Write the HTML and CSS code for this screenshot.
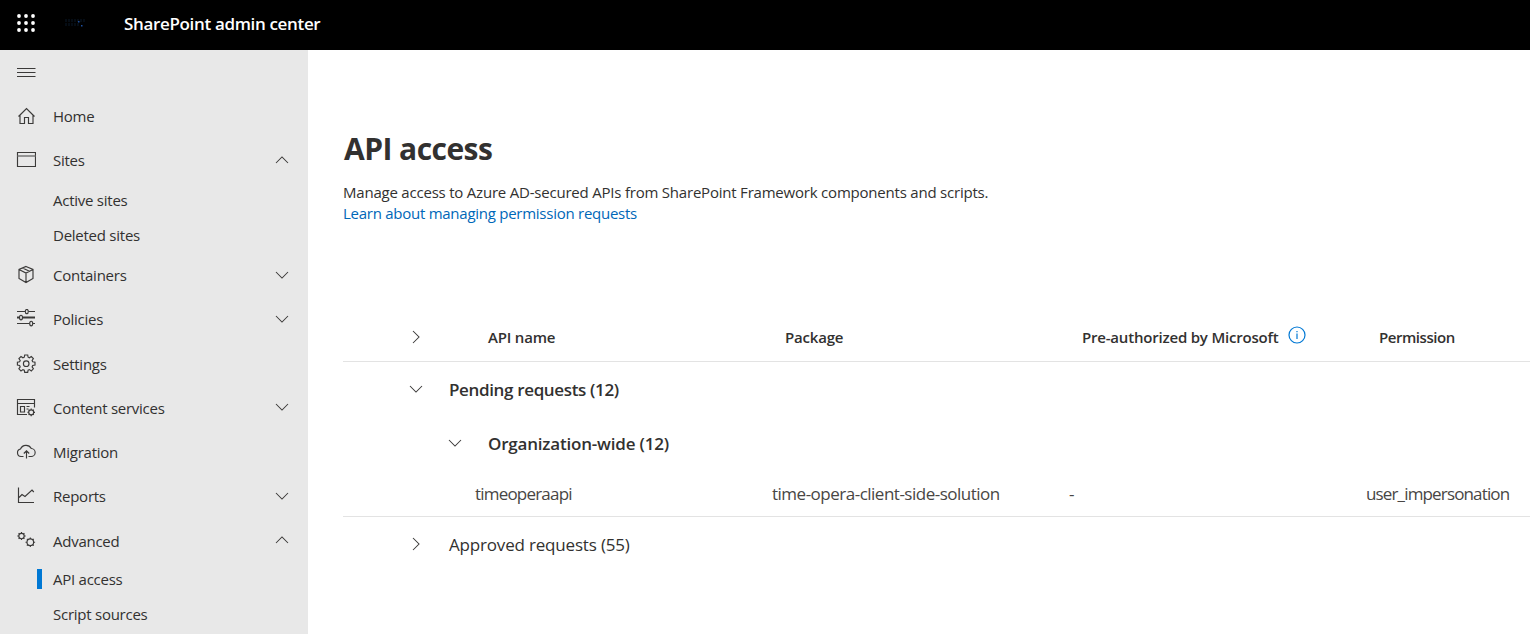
FILE: index.html
```html
<!DOCTYPE html>
<html lang="en">
<head>
  <meta charset="UTF-8" />
  <meta name="viewport" content="width=device-width, initial-scale=1.0" />
  <title>API access - SharePoint admin center</title>
  <link rel="stylesheet" href="styles.css">
</head>
<body>

<svg class="sprite" width="0" height="0">
  <symbol id="chev" viewBox="0 0 14 14"><path d="M1 4l6 6 6-6"/></symbol>
</svg>

<header class="topbar">
  <svg class="waffle" width="20" height="20" viewBox="0 0 20 20">
    <circle cx="3" cy="3" r="1.9"/><circle cx="10" cy="3" r="1.9"/><circle cx="17" cy="3" r="1.9"/>
    <circle cx="3" cy="10" r="1.9"/><circle cx="10" cy="10" r="1.9"/><circle cx="17" cy="10" r="1.9"/>
    <circle cx="3" cy="17" r="1.9"/><circle cx="10" cy="17" r="1.9"/><circle cx="17" cy="17" r="1.9"/>
  </svg>
  <svg class="logo" width="20" height="10" viewBox="0 0 20 10">
    <path d="M0 2.5h20M0 6.5h14" stroke="#050c14" stroke-width="3" stroke-dasharray="2 1"/>
    <rect x="13" y="3" width="1.5" height="1.5" fill="#1d4fa0"/>
    <rect x="16" y="7" width="1.5" height="1.5" fill="#1d4fa0"/>
  </svg>
  <span class="app-name">SharePoint admin center</span>
</header>

<div class="layout">
  <nav class="sidebar">
    <button type="button" class="menu-btn" aria-label="Menu">
      <svg class="icon" viewBox="0 0 20 20"><path d="M1 6.500h18.500M1 10.500h18.500M1 14.500h18.500"/></svg>
    </button>

    <a class="nav-item">
      <svg class="icon" viewBox="0 0 20 20"><path d="M2.500 10.500L10.500 2.500l8 8M4 9.200v8.300h4.500v-6h4v6H17V9.200"/></svg>
      <span>Home</span>
    </a>
    <a class="nav-item">
      <svg class="icon" viewBox="0 0 20 20"><path d="M1.500 2.500h18v14h-18z"/><path d="M1.500 6h18" class="soft"/></svg>
      <span>Sites</span>
      <svg class="chev up"><use href="#chev"/></svg>
    </a>
    <a class="sub-item">Active sites</a>
    <a class="sub-item">Deleted sites</a>
    <a class="nav-item">
      <svg class="icon" viewBox="0 0 20 20"><path d="M10 1.500l7 3v9l-7 4-7-4v-9zM3 4.500l7 3.500 7-3.500M10 8v9.500M6.500 3l7 3.300"/></svg>
      <span>Containers</span>
      <svg class="chev"><use href="#chev"/></svg>
    </a>
    <a class="nav-item">
      <svg class="icon" viewBox="0 0 20 20"><path d="M1 2.500h8M12.500 2.500H19M1 14.500h12.500M17 14.500h2"/><path d="M1 8.500h2M7 8.500h12" class="thick"/><ellipse cx="10.800" cy="2.500" rx="1.500" ry="2.100"/><ellipse cx="5" cy="8.500" rx="1.500" ry="2.300"/><ellipse cx="15.200" cy="14.500" rx="1.500" ry="2.300"/></svg>
      <span>Policies</span>
      <svg class="chev"><use href="#chev"/></svg>
    </a>
    <a class="nav-item">
      <svg class="icon" viewBox="0 0 20 20"><path d="M8.700 1h3l.4 2.200 1.300.6 1.900-1.300 2.100 2.100-1.300 1.900.6 1.300 2.300.4v2.900l-2.300.4-.6 1.400 1.300 1.900-2.100 2.100-1.900-1.300-1.300.6-.4 2.200h-3l-.4-2.200-1.400-.6L5 16.900l-2.100-2.100 1.300-1.900-.6-1.400-2.200-.4V8.200l2.200-.4.6-1.300-1.300-1.900L5 2.500l1.900 1.300 1.400-.6z"/><circle cx="10.200" cy="9.700" r="2.800"/></svg>
      <span>Settings</span>
    </a>
    <a class="nav-item">
      <svg class="icon" viewBox="0 0 20 20"><path d="M11 16.500H1.500v-15h17v8M1.500 5.500h17M4.500 8.500h4v5.500h-4zM10.500 8.500h3M10.500 11h2"/><circle cx="15.200" cy="14.300" r="2.500"/><path d="M15.200 10.500v1.300M15.200 16.800v1.400M11.500 14.300h1.200M17.700 14.300H19M12.600 11.700l.9.900M16.900 16l.9.900M12.600 16.900l.9-.9M16.900 12.600l.9-.9"/></svg>
      <span>Content services</span>
      <svg class="chev"><use href="#chev"/></svg>
    </a>
    <a class="nav-item">
      <svg class="icon" viewBox="0 0 20 20"><path d="M7.500 14.500H5a3.800 3.800 0 0 1-.5-7.500A6 6 0 0 1 15.300 6.500a4 4 0 0 1-.3 8h-2.500M10.500 16.500V9M7.800 11.500l2.700-2.700 2.700 2.700"/></svg>
      <span>Migration</span>
    </a>
    <a class="nav-item">
      <svg class="icon" viewBox="0 0 20 20"><path d="M2.500 1.500v15H18M3 11.500L6 8.500l3 2L16 4l1.800 2"/></svg>
      <span>Reports</span>
      <svg class="chev"><use href="#chev"/></svg>
    </a>
    <a class="nav-item">
      <svg class="icon" viewBox="0 0 20 20"><circle cx="5.500" cy="5" r="2.700"/><path d="M5.500 1v1.300M5.500 7.700V9M1.300 5h1.500M8.200 5h1.500M2.600 2.100l1 1M7.400 6.900l1 1M2.600 7.900l1-1M7.400 3.100l1-1"/><circle cx="14.300" cy="11.200" r="3.300"/><path d="M14.300 6.500v1.400M14.300 14.500V16M9.500 11.200H11M17.600 11.200h1.500M10.900 7.800l1 1M16.700 13.600l1 1M10.900 14.600l1-1M16.700 8.800l1-1"/></svg>
      <span>Advanced</span>
      <svg class="chev up"><use href="#chev"/></svg>
    </a>
    <a class="sub-item active">API access</a>
    <a class="sub-item">Script sources</a>
  </nav>

  <main class="content">
    <h1>API access</h1>
    <p class="intro">Manage access to Azure AD-secured APIs from SharePoint Framework components and scripts.</p>
    <a class="learn">Learn about managing permission requests</a>

    <div class="table">
      <div class="row head">
        <svg class="chev right"><use href="#chev"/></svg>
        <span class="cell">API name</span>
        <span class="cell">Package</span>
        <span class="cell preauth">Pre-authorized by Microsoft
          <svg class="info" width="18" height="18" viewBox="0 0 18 18"><circle cx="9" cy="9" r="8"/><path d="M9 7.500v5.500M9 5v1.300"/></svg>
        </span>
        <span class="cell permission">Permission</span>
      </div>
      <div class="group pending">
        <svg class="chev"><use href="#chev"/></svg>
        <span class="group-name">Pending requests (12)</span>
      </div>
      <div class="group nested">
        <svg class="chev"><use href="#chev"/></svg>
        <span class="group-name">Organization-wide (12)</span>
      </div>
      <div class="row item">
        <span class="cell api">timeoperaapi</span>
        <span class="cell">time-opera-client-side-solution</span>
        <span class="cell">-</span>
        <span class="cell perm">user_impersonation</span>
      </div>
      <div class="group approved">
        <svg class="chev right"><use href="#chev"/></svg>
        <span class="group-name">Approved requests (55)</span>
      </div>
    </div>
  </main>
</div>

</body>
</html>
```
FILE: styles.css
```css
html, body {
  margin: 0;
  padding: 0;
  height: 100%;
  overflow: hidden;
  font-family: "Open Sans", "Noto Sans", sans-serif;
  color: #323130;
  background: #fff;
}
body {
  display: flex;
  flex-direction: column;
}
.sprite {
  position: absolute;
}
svg {
  flex: none;
  fill: none;
  stroke: #3b3a39;
}
.topbar {
  display: flex;
  align-items: center;
  flex: none;
  height: 50px;
  box-sizing: border-box;
  padding: 0 16px 4px;
  background: #000;
  color: #fff;
}
.waffle {
  margin-top: -1px;
  fill: #fff;
  stroke: none;
}
.logo {
  margin-left: 29px;
  stroke: none;
}
.app-name {
  margin-left: 39px;
  font-size: 17px;
  font-weight: 600;
  letter-spacing: -0.34px;
}
.layout {
  display: flex;
  flex: 1;
  min-height: 0;
}
.sidebar {
  flex: none;
  width: 308px;
  overflow: hidden;
  background: #e8e8e8;
  font-size: 15px;
}
.menu-btn {
  display: flex;
  align-items: center;
  height: 44px;
  padding: 0 16px;
  border: none;
  background: none;
}
.nav-item {
  display: flex;
  align-items: center;
  height: 44.25px;
  box-sizing: border-box;
  padding: 0 19px 0 16px;
}
.nav-item span {
  flex: 1;
  margin-left: 17px;
  letter-spacing: -0.25px;
}
.icon {
  width: 20px;
  height: 20px;
  stroke-width: 1.15;
}
.soft {
  stroke: #777;
  stroke-width: 1.5;
}
.thick {
  stroke-width: 2;
}
.chev {
  width: 14px;
  height: 14px;
  margin-top: -1px;
  stroke-width: 1.05;
}
.up {
  transform: rotate(180deg);
}
.right {
  transform: rotate(-90deg);
}
.sub-item {
  display: flex;
  align-items: center;
  height: 35.3px;
  padding-left: 53px;
  letter-spacing: -0.25px;
}
.sub-item.active {
  height: 35px;
  margin-top: -1.5px;
  padding-left: 11px;
}
.sub-item.active::before {
  content: "";
  width: 5px;
  height: 20px;
  margin-left: 26px;
  margin-right: 11px;
  background: #0078d4;
}
.content {
  flex: 1;
  min-width: 0;
  padding-left: 35px;
}
h1 {
  margin: 78px 0 0 1px;
  font-size: 30px;
  line-height: 42px;
  letter-spacing: -0.55px;
}
.intro {
  margin: 12px 0 0;
  font-size: 15px;
  line-height: 21px;
  letter-spacing: -0.21px;
}
.learn {
  display: block;
  font-size: 15px;
  line-height: 21px;
  letter-spacing: -0.26px;
  color: #0067b8;
}
.table {
  margin-top: 89px;
}
.row {
  display: grid;
  align-items: center;
  box-sizing: border-box;
  border-bottom: 1px solid #e3e3e3;
  white-space: nowrap;
}
.head {
  grid-template-columns: 79px 297px 297px 297px 1fr;
  height: 49px;
  padding-left: 66px;
  font-size: 15px;
  font-weight: 600;
  letter-spacing: -0.2px;
}
.preauth {
  display: flex;
  align-items: center;
  gap: 9px;
}
.permission {
  letter-spacing: -0.45px;
}
.info {
  margin-top: -4px;
  stroke: #0078d4;
  stroke-width: 1.2;
}
.group {
  display: flex;
  align-items: center;
  height: 55px;
  padding-left: 66px;
  font-size: 17px;
  font-weight: 600;
}
.group-name {
  margin-left: 26px;
}
.pending {
  letter-spacing: -0.35px;
}
.nested {
  height: 53px;
  padding-left: 105px;
  letter-spacing: -0.2px;
}
.item {
  grid-template-columns: 297px 297px 297px 1fr;
  height: 47px;
  padding-left: 132px;
  font-size: 17px;
  letter-spacing: -0.5px;
  color: #484644;
}
.api {
  letter-spacing: -0.8px;
}
.perm {
  letter-spacing: -0.85px;
}
.approved {
  font-weight: 400;
  letter-spacing: -0.18px;
}
```
